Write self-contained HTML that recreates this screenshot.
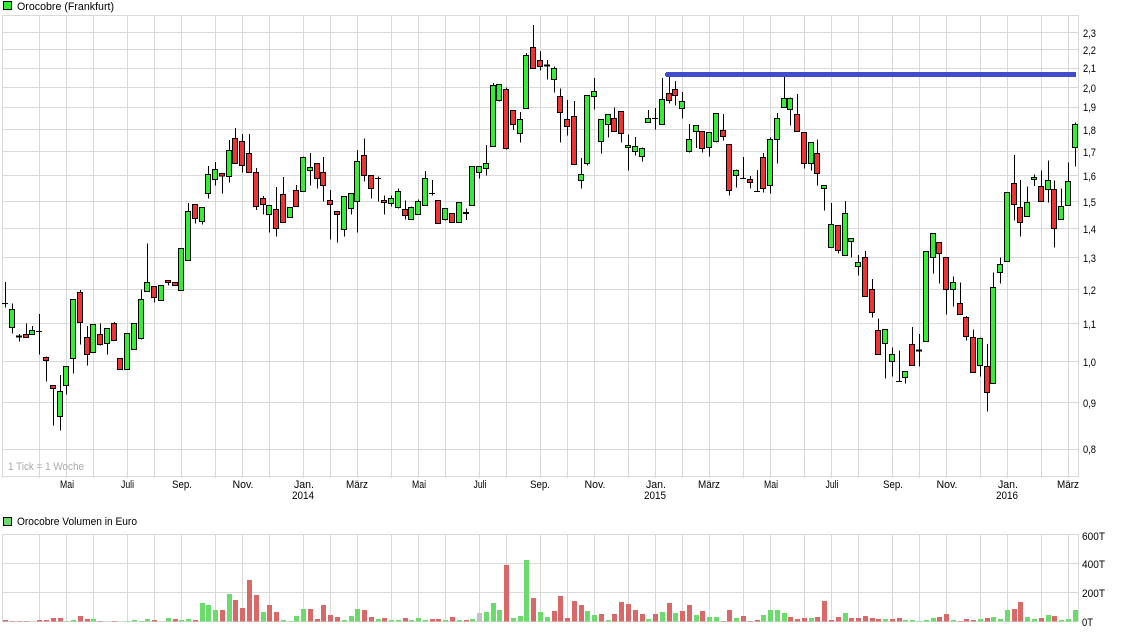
<!DOCTYPE html>
<html><head><meta charset="utf-8"><title>Orocobre</title>
<style>
html,body{margin:0;padding:0;background:#fff;overflow:hidden}
svg{position:absolute;left:0;top:0}
text{font-family:"Liberation Sans",Arial,sans-serif;font-size:11px;fill:#000}
.m text{text-anchor:middle}
.w{fill:none;stroke:#000;stroke-width:3}
.g{fill:#33ee33;stroke:#000;stroke-width:3}
.r{fill:#ee3333;stroke:#000;stroke-width:3}
.t{fill:none;stroke:#000;stroke-width:6}
.vg{fill:none;stroke:#6bdb6b;stroke-width:15}
.vr{fill:none;stroke:#d96868;stroke-width:15}
</style></head><body>
<svg width="1125" height="633" viewBox="0 0 1125 633" shape-rendering="crispEdges">
<path fill="none" stroke="#d9d9d9" stroke-width="1" d="M2.5 15V478M39.5 15V478M66.5 15V478M93.5 15V478M127.5 15V478M154.5 15V478M181.5 15V478M215.5 15V478M242.5 15V478M269.5 15V478M303.5 15V478M330.5 15V478M357.5 15V478M391.5 15V478M418.5 15V478M445.5 15V478M479.5 15V478M506.5 15V478M540.5 15V478M567.5 15V478M594.5 15V478M628.5 15V478M655.5 15V478M682.5 15V478M709.5 15V478M743.5 15V478M770.5 15V478M804.5 15V478M831.5 15V478M858.5 15V478M892.5 15V478M919.5 15V478M946.5 15V478M980.5 15V478M1007.5 15V478M1041.5 15V478M1068.5 15V478M1078.5 15V477
M2 15.5H1079M2 32.5H1079M2 49.5H1079M2 68.5H1079M2 87.5H1079M2 107.5H1079M2 129.5H1079M2 151.5H1079M2 175.5H1079M2 201.5H1079M2 228.5H1079M2 257.5H1079M2 289.5H1079M2 323.5H1079M2 361.5H1079M2 402.5H1079M2 449.5H1079M2 476.5H1079
M2.5 534V622M39.5 534V622M66.5 534V622M93.5 534V622M127.5 534V622M154.5 534V622M181.5 534V622M215.5 534V622M242.5 534V622M269.5 534V622M303.5 534V622M330.5 534V622M357.5 534V622M391.5 534V622M418.5 534V622M445.5 534V622M479.5 534V622M506.5 534V622M540.5 534V622M567.5 534V622M594.5 534V622M628.5 534V622M655.5 534V622M682.5 534V622M709.5 534V622M743.5 534V622M770.5 534V622M804.5 534V622M831.5 534V622M858.5 534V622M892.5 534V622M919.5 534V622M946.5 534V622M980.5 534V622M1007.5 534V622M1041.5 534V622M1068.5 534V622M1078.5 534V622
M2 534.5H1079M2 563.5H1079M2 592.5H1079M2 621.5H1079"/>
<svg x="0" y="0" width="1125" height="633" viewBox="0 0 3375 1899">
<!-- volume -->
<g transform="translate(1.5,1530)">
<path class="vr" d="M15 330V335M36 333V335M57 333V335M78 333V335M117 330V335M138 330V335M159 324V335M180 324V335M240 318V335M261 327V335M300 333V335M342 333V335M462 330V335M525 327V335M585 330V335M666 300V335M705 270V335M726 294V335M747 210V335M768 255V335M807 285V335M828 306V335M930 297V335M951 327V335M969 285V335M990 315V335M1011 321V335M1092 300V335M1113 321V335"/>
<path class="vg" d="M198 333V335M219 330V335M279 327V335M381 333V335M402 330V335M423 333V335M441 327V335M504 324V335M543 330V335M564 327V335M606 279V335M624 285V335M645 300V335M687 252V335M789 306V335M849 330V335M870 333V335M888 318V335M909 297V335M1032 330V335M1053 318V335M1071 297V335M1134 327V335"/>
</g>
<g transform="translate(1126.5,1530)">
<path class="vr" d="M27 324V335M90 324V335M171 327V335M189 327V335M231 321V335M273 330V335M393 165V335M474 264V335M537 303V335M555 258V335M576 324V335M597 273V335M618 285V335M678 312V335M717 312V335M738 276V335M759 282V335M780 300V335M801 312V335M840 312V335M882 279V335M921 303V335M942 285V335M981 303V335M1044 333V335M1062 300V335M1104 318V335M1125 333V335"/>
<path class="vg" d="M48 330V335M69 330V335M108 330V335M129 324V335M150 330V335M210 330V335M252 330V335M291 327V335M333 306V335M354 279V335M372 300V335M414 324V335M435 318V335M453 150V335M495 306V335M516 321V335M636 303V335M657 315V335M699 330V335M819 327V335M861 306V335M900 309V335M963 315V335M1002 321V335M1023 321V335M1083 324V335"/>
<path fill="none" stroke="#c3c3c3" stroke-width="15" d="M312 309V335"/>
</g>
<g transform="translate(2236.5,1530)">
<path class="vr" d="M36 330V335M135 321V335M156 327V335M177 324V335M216 321V335M237 273V335M258 330V335M279 321V335M318 324V335M339 324V335M360 318V335M381 324V335M399 327V335M441 327V335M462 324V335M582 321V335M603 312V335M645 333V335M663 327V335M684 330V335M726 324V335M807 297V335M825 276V335M888 324V335M927 318V335"/>
<path class="vg" d="M54 315V335M75 300V335M96 300V335M117 309V335M198 324V335M300 309V335M420 327V335M480 330V335M501 330V335M522 333V335M543 330V335M564 324V335M624 330V335M705 327V335M744 321V335M765 327V335M786 300V335M846 321V335M867 327V335M909 315V335M948 330V335M969 327V335M990 300V335"/>
</g>
<!-- candles A -->
<g transform="translate(1.5,720)">
<path class="w" d="M15 126V203M15 190h-10.500h18M36 190V281M57 282V305M78 250V293M96 258V283M117 222V344M117 274h-10.500h18M138 349V425M159 436V557M180 405V572M198 379V464M219 178V401M240 150V314M261 258V377M279 253V337M300 250V316M321 265V344M342 246V301M423 148V298M441 10V154M462 139V188M504 121V137"/>
<path class="t" d="M57 290h-10.500h18"/>
<path class="g" d="M36 208h6V262h-15V208zM96 272h6V283h-15V272zM180 454h6V529h-15V454zM198 379h6V436h-15V379zM219 178h6V355h-15V178zM279 253h6V337h-15V253zM321 265h6V310h-15V265zM381 280h6V388h-15V280zM402 250h6V328h-15V250zM423 178h6V295h-15V178zM441 127h6V154h-15V127zM483 136h6V181h-15V136zM543 25h6V151h-15V25z"/>
<path class="r" d="M78 284h6V292h-15V284zM138 352h6V361h-15V352zM159 436h6V445h-15V436zM240 157h6V247h-15V157zM261 292h6V343h-15V292zM300 283h6V313h-15V283zM342 250h6V301h-15V250zM360 355h6V388h-15V355zM462 139h6V172h-15V139zM504 121h6V127h-15V121zM525 127h6V136h-15V127z"/>
</g>
<!-- candles B -->
<g transform="translate(1.5,0)">
<path class="w" d="M564 609V781M585 613V671M606 622V674M624 498V596M645 486V557M666 520V581M687 420V548M705 384V490M726 402V518M747 402V517M768 504V630M789 588V644M807 616V698"/>
<path class="g" d="M564 634h6V781h-15V634zM606 622h6V664h-15V622zM624 523h6V580h-15V523zM645 508h6V538h-15V508zM687 451h6V529h-15V451zM807 616h6V643h-15V616z"/>
<path class="r" d="M585 613h6V655h-15V613zM666 520h6V528h-15V520zM705 415h6V490h-15V415zM726 424h6V496h-15V424zM747 460h6V517h-15V460zM768 517h6V619h-15V517zM789 595h6V613h-15V595z"/>
</g>
<!-- candles C -->
<g transform="translate(601.5,360)">
<path class="w" d="M228 201V350M249 171V307M288 195V259M309 109V214M330 99V196M351 130V206M369 111V245M390 210V359M411 275V368M432 229V350M453 220V284M471 90V338M492 55V185M513 166V236M534 169V245M534 175h-10.500h18M552 226V284M573 226V259M594 205V266M615 241V298M633 260V298M654 238V283M675 153V256M696 180V226M696 220h-10.500h18M735 265V301M798 265V300M837 139V175"/>
<path class="t" d="M798 279h-10.500h18"/>
<path class="g" d="M270 262h6V292h-15V262zM309 112h6V214h-15V112zM330 142h6V151h-15V142zM432 229h6V328h-15V229zM453 220h6V265h-15V220zM471 124h6V244h-15V124zM573 235h6V250h-15V235zM594 214h6V262h-15V214zM633 262h6V298h-15V262zM654 244h6V283h-15V244zM675 175h6V256h-15V175zM735 265h6V298h-15V265zM777 247h6V307h-15V247zM816 139h6V256h-15V139zM837 139h6V157h-15V139z"/>
<path class="r" d="M228 268h6V325h-15V268zM249 223h6V307h-15V223zM288 211h6V259h-15V211zM351 130h6V175h-15V130zM369 157h6V196h-15V157zM390 241h6V253h-15V241zM411 275h6V283h-15V275zM492 106h6V166h-15V106zM513 166h6V205h-15V166zM552 241h6V247h-15V241zM615 268h6V286h-15V268zM714 241h6V310h-15V241zM756 280h6V307h-15V280z"/>
</g>
<!-- candles D -->
<g transform="translate(1381.5,60)">
<path class="w" d="M78 375V467M99 189V379M117 193V245M138 202V389M159 271V330M180 276V368M198 99V265M219 15V145M240 93V152M261 120V179M282 139V218M300 205V368M321 240V347M342 243V433M363 414V506M381 226V437M402 174V268M423 298V401M444 283V352M462 262V334M483 274V368M504 343V452M525 351V407M546 382V425M564 270V307M585 264V329M585 295h-10.500h18M606 174V313M627 170V250M645 183V257M666 216V296"/>
<path class="t" d="M261 137h-10.500h18"/>
<path class="g" d="M78 430h6V445h-15V430zM99 196h6V379h-15V196zM117 193h6V241h-15V193zM180 298h6V340h-15V298zM198 106h6V265h-15V106zM282 145h6V178h-15V145zM363 463h6V481h-15V463zM381 226h6V430h-15V226zM402 214h6V229h-15V214zM423 298h6V364h-15V298zM444 283h6V313h-15V283zM504 376h6V382h-15V376zM525 379h6V394h-15V379zM546 385h6V409h-15V385zM564 295h6V307h-15V295zM606 238h6V313h-15V238zM666 244h6V265h-15V244z"/>
<path class="r" d="M138 208h6V385h-15V208zM159 271h6V313h-15V271zM219 82h6V145h-15V82zM240 121h6V139h-15V121zM300 229h6V277h-15V229zM321 298h6V319h-15V298zM342 289h6V433h-15V289zM462 295h6V334h-15V295zM483 274h6V340h-15V274zM627 220h6V241h-15V220zM645 208h6V226h-15V208z"/>
</g>
<!-- candles E -->
<g transform="translate(1921.5,180)">
<path class="w" d="M147 192V278M168 196V264M186 214V278M207 217V290M228 160V248M249 162V242M267 253V407M288 328V383M309 291V355M309 355h-10.500h18M330 348V386M351 330V394M351 394h-10.500h18M369 279V398M390 232V401M411 159V311M432 48V142M450 112V197M471 102V214M492 217V326M513 247V332M531 238V377"/>
<path class="g" d="M147 238h6V275h-15V238zM168 196h6V214h-15V196zM207 217h6V262h-15V217zM228 160h6V244h-15V160zM288 331h6V346h-15V331zM390 238h6V376h-15V238zM411 175h6V238h-15V175zM432 115h6V142h-15V115zM450 115h6V148h-15V115zM513 247h6V310h-15V247z"/>
<path class="r" d="M186 214h6V265h-15V214zM249 211h6V229h-15V211zM267 253h6V391h-15V253zM330 358h6V367h-15V358zM369 292h6V385h-15V292zM471 163h6V214h-15V163zM492 217h6V310h-15V217zM531 280h6V340h-15V280z"/>
</g>
<!-- candles F -->
<g transform="translate(2431.5,540)">
<path class="w" d="M42 16V92M63 69V202M84 136V221M105 63V226M123 175V233M144 225V287M165 213V349M186 297V412M204 415V523M225 448V596M246 502V590M267 511V604M267 604h-10.500h18M285 574V611M306 441V556M327 462V560M369 160V281M387 187V311M408 232V404M429 289V380M450 307V403M468 408V482M489 448V577M510 472V590M531 492V695M549 277V610M570 232V311"/>
<path class="t" d="M327 512h-10.500h18"/>
<path class="g" d="M42 16h6V25h-15V16zM63 133h6V202h-15V133zM105 100h6V226h-15V100zM123 175h6V184h-15V175zM144 247h6V259h-15V247zM225 448h6V490h-15V448zM246 523h6V544h-15V523zM285 574h6V592h-15V574zM348 214h6V484h-15V214zM369 160h6V232h-15V160zM429 307h6V328h-15V307zM510 475h6V556h-15V475zM549 322h6V610h-15V322zM570 253h6V277h-15V253z"/>
<path class="r" d="M84 136h6V211h-15V136zM165 232h6V349h-15V232zM186 328h6V397h-15V328zM204 451h6V523h-15V451zM306 493h6V556h-15V493zM387 187h6V220h-15V187zM408 232h6V328h-15V232zM450 370h6V403h-15V370zM468 412h6V469h-15V412zM489 472h6V577h-15V472zM531 559h6V637h-15V559z"/>
</g>
<!-- candles G -->
<g transform="translate(2896.5,330)">
<path class="w" d="M147 135V332M165 210V380M186 229V319M207 193V228M228 181V274M249 151V277M267 211V413M288 235V328M309 157V286M330 37V170"/>
<path class="g" d="M126 247h6V454h-15V247zM186 277h6V319h-15V277zM207 202h6V208h-15V202zM249 211h6V238h-15V211zM288 289h6V328h-15V289zM309 214h6V286h-15V214zM330 43h6V112h-15V43z"/>
<path class="r" d="M147 220h6V283h-15V220zM165 292h6V337h-15V292zM228 229h6V274h-15V229zM267 238h6V355h-15V238z"/>
</g>
</svg>
<!-- blue line -->
<rect x="665" y="73" width="2" height="3" fill="#3f4ccc"/>
<rect x="666" y="72" width="410" height="5" fill="#3f4ccc"/>
<!-- legends -->
<rect x="3.500" y="1.500" width="8" height="8" fill="#33ee33" stroke="#000"/>
<rect x="3.500" y="517.500" width="8" height="8" fill="#6bdb6b" stroke="#000"/>
<g shape-rendering="auto">
<text x="17" y="10" textLength="97" lengthAdjust="spacingAndGlyphs">Orocobre (Frankfurt)</text>
<text x="17" y="525" textLength="120" lengthAdjust="spacingAndGlyphs">Orocobre Volumen in Euro</text>
<text x="8" y="470" textLength="76" lengthAdjust="spacingAndGlyphs" style="fill:#aaa">1 Tick = 1 Woche</text>
<text x="1083" y="37" textLength="13" lengthAdjust="spacingAndGlyphs">2,3</text><text x="1083" y="54" textLength="13" lengthAdjust="spacingAndGlyphs">2,2</text><text x="1083" y="72" textLength="13" lengthAdjust="spacingAndGlyphs">2,1</text><text x="1083" y="92" textLength="13" lengthAdjust="spacingAndGlyphs">2,0</text><text x="1083" y="111" textLength="13" lengthAdjust="spacingAndGlyphs">1,9</text><text x="1083" y="134" textLength="13" lengthAdjust="spacingAndGlyphs">1,8</text><text x="1083" y="156" textLength="13" lengthAdjust="spacingAndGlyphs">1,7</text><text x="1083" y="180" textLength="13" lengthAdjust="spacingAndGlyphs">1,6</text><text x="1083" y="206" textLength="13" lengthAdjust="spacingAndGlyphs">1,5</text><text x="1083" y="233" textLength="13" lengthAdjust="spacingAndGlyphs">1,4</text><text x="1083" y="262" textLength="13" lengthAdjust="spacingAndGlyphs">1,3</text><text x="1083" y="294" textLength="13" lengthAdjust="spacingAndGlyphs">1,2</text><text x="1083" y="328" textLength="13" lengthAdjust="spacingAndGlyphs">1,1</text><text x="1083" y="366" textLength="13" lengthAdjust="spacingAndGlyphs">1,0</text><text x="1083" y="407" textLength="13" lengthAdjust="spacingAndGlyphs">0,9</text><text x="1083" y="453" textLength="13" lengthAdjust="spacingAndGlyphs">0,8</text>
<text x="1082" y="540" textLength="23" lengthAdjust="spacingAndGlyphs">600T</text><text x="1082" y="568" textLength="23" lengthAdjust="spacingAndGlyphs">400T</text><text x="1082" y="597" textLength="23" lengthAdjust="spacingAndGlyphs">200T</text><text x="1082" y="626" textLength="11" lengthAdjust="spacingAndGlyphs">0T</text>
<g class="m">
<text x="67" y="488" textLength="14" lengthAdjust="spacingAndGlyphs">Mai</text><text x="127.500" y="488" textLength="13" lengthAdjust="spacingAndGlyphs">Juli</text><text x="182" y="488" textLength="20" lengthAdjust="spacingAndGlyphs">Sep.</text><text x="243" y="488" textLength="21" lengthAdjust="spacingAndGlyphs">Nov.</text><text x="304" y="488" textLength="20" lengthAdjust="spacingAndGlyphs">Jan.</text><text x="357" y="488" textLength="22" lengthAdjust="spacingAndGlyphs">März</text><text x="419" y="488" textLength="14" lengthAdjust="spacingAndGlyphs">Mai</text><text x="480" y="488" textLength="13" lengthAdjust="spacingAndGlyphs">Juli</text><text x="540" y="488" textLength="20" lengthAdjust="spacingAndGlyphs">Sep.</text><text x="595" y="488" textLength="21" lengthAdjust="spacingAndGlyphs">Nov.</text><text x="656" y="488" textLength="20" lengthAdjust="spacingAndGlyphs">Jan.</text><text x="709" y="488" textLength="22" lengthAdjust="spacingAndGlyphs">März</text><text x="771" y="488" textLength="14" lengthAdjust="spacingAndGlyphs">Mai</text><text x="832" y="488" textLength="13" lengthAdjust="spacingAndGlyphs">Juli</text><text x="893" y="488" textLength="20" lengthAdjust="spacingAndGlyphs">Sep.</text><text x="947" y="488" textLength="21" lengthAdjust="spacingAndGlyphs">Nov.</text><text x="1008" y="488" textLength="20" lengthAdjust="spacingAndGlyphs">Jan.</text><text x="1068" y="488" textLength="22" lengthAdjust="spacingAndGlyphs">März</text>
<text x="303" y="499" textLength="22" lengthAdjust="spacingAndGlyphs">2014</text><text x="655" y="499" textLength="22" lengthAdjust="spacingAndGlyphs">2015</text><text x="1007" y="499" textLength="22" lengthAdjust="spacingAndGlyphs">2016</text>
</g>
</g>
</svg>
</body></html>
